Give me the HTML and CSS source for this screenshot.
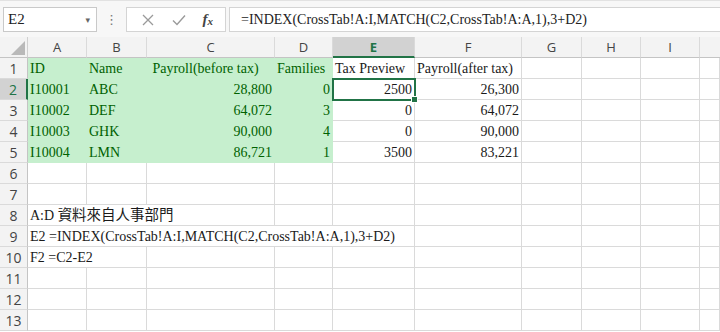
FILE: index.html
```html
<!DOCTYPE html>
<html lang="zh-Hant">
<head>
    <meta charset="UTF-8">
    <meta name="viewport" content="width=device-width, initial-scale=1.0">
    <title>CrossTab - Payroll</title>
    <link rel="stylesheet" href="styles.css">
</head>
<body>
    <div class="formula-bar">
        <div class="name-box">
            <span class="cell-ref">E2</span>
            <span class="drop">&#9662;</span>
        </div>
        <div class="grip">&#8942;</div>
        <div class="fx-buttons">
            <svg class="btn-icon" width="14" height="14" viewBox="0 0 14 14">
                <path d="M2 2 L12 12 M12 2 L2 12" stroke="#9a9a9a" stroke-width="1.3" fill="none"/>
            </svg>
            <svg class="btn-icon" width="16" height="14" viewBox="0 0 16 14">
                <path d="M2 7.5 L6 11.5 L14 2.5" stroke="#9a9a9a" stroke-width="1.4" fill="none"/>
            </svg>
            <span class="fx">f<sub>x</sub></span>
        </div>
        <div class="formula-input">=INDEX(CrossTab!A:I,MATCH(C2,CrossTab!A:A,1),3+D2)</div>
    </div>

    <div class="sheet">
        <!-- column headers -->
        <div class="corner"><span class="tri"></span></div>
        <div class="col-head">A</div>
        <div class="col-head">B</div>
        <div class="col-head">C</div>
        <div class="col-head">D</div>
        <div class="col-head active">E</div>
        <div class="col-head">F</div>
        <div class="col-head">G</div>
        <div class="col-head">H</div>
        <div class="col-head">I</div>
        <div class="col-head last"></div>

        <!-- row 1 -->
        <div class="row-head">1</div>
        <div class="cell good">ID</div>
        <div class="cell good">Name</div>
        <div class="cell good mid">Payroll(before tax)</div>
        <div class="cell good">Families</div>
        <div class="cell">Tax Preview</div>
        <div class="cell">Payroll(after tax)</div>
        <div class="cell"></div>
        <div class="cell"></div>
        <div class="cell"></div>
        <div class="cell"></div>

        <!-- row 2 -->
        <div class="row-head active">2</div>
        <div class="cell good">I10001</div>
        <div class="cell good">ABC</div>
        <div class="cell good num">28,800</div>
        <div class="cell good num">0</div>
        <div class="cell num selected">2500<span class="handle"></span></div>
        <div class="cell num">26,300</div>
        <div class="cell"></div>
        <div class="cell"></div>
        <div class="cell"></div>
        <div class="cell"></div>

        <!-- row 3 -->
        <div class="row-head">3</div>
        <div class="cell good">I10002</div>
        <div class="cell good">DEF</div>
        <div class="cell good num">64,072</div>
        <div class="cell good num">3</div>
        <div class="cell num">0</div>
        <div class="cell num">64,072</div>
        <div class="cell"></div>
        <div class="cell"></div>
        <div class="cell"></div>
        <div class="cell"></div>

        <!-- row 4 -->
        <div class="row-head">4</div>
        <div class="cell good">I10003</div>
        <div class="cell good">GHK</div>
        <div class="cell good num">90,000</div>
        <div class="cell good num">4</div>
        <div class="cell num">0</div>
        <div class="cell num">90,000</div>
        <div class="cell"></div>
        <div class="cell"></div>
        <div class="cell"></div>
        <div class="cell"></div>

        <!-- row 5 -->
        <div class="row-head">5</div>
        <div class="cell good">I10004</div>
        <div class="cell good">LMN</div>
        <div class="cell good num">86,721</div>
        <div class="cell good num">1</div>
        <div class="cell num">3500</div>
        <div class="cell num">83,221</div>
        <div class="cell"></div>
        <div class="cell"></div>
        <div class="cell"></div>
        <div class="cell"></div>

        <!-- row 6 -->
        <div class="row-head">6</div>
        <div class="cell"></div>
        <div class="cell"></div>
        <div class="cell"></div>
        <div class="cell"></div>
        <div class="cell"></div>
        <div class="cell"></div>
        <div class="cell"></div>
        <div class="cell"></div>
        <div class="cell"></div>
        <div class="cell"></div>

        <!-- row 7 -->
        <div class="row-head">7</div>
        <div class="cell"></div>
        <div class="cell"></div>
        <div class="cell"></div>
        <div class="cell"></div>
        <div class="cell"></div>
        <div class="cell"></div>
        <div class="cell"></div>
        <div class="cell"></div>
        <div class="cell"></div>
        <div class="cell"></div>

        <!-- row 8: text spills over A:C -->
        <div class="row-head">8</div>
        <div class="cell span3">A:D&nbsp;<span class="cjk">資料來自人事部門</span></div>
        <div class="cell"></div>
        <div class="cell"></div>
        <div class="cell"></div>
        <div class="cell"></div>
        <div class="cell"></div>
        <div class="cell"></div>
        <div class="cell"></div>

        <!-- row 9: text spills over A:E -->
        <div class="row-head">9</div>
        <div class="cell span5">E2 =INDEX(CrossTab!A:I,MATCH(C2,CrossTab!A:A,1),3+D2)</div>
        <div class="cell"></div>
        <div class="cell"></div>
        <div class="cell"></div>
        <div class="cell"></div>
        <div class="cell"></div>

        <!-- row 10 -->
        <div class="row-head">10</div>
        <div class="cell span2">F2 =C2-E2</div>
        <div class="cell"></div>
        <div class="cell"></div>
        <div class="cell"></div>
        <div class="cell"></div>
        <div class="cell"></div>
        <div class="cell"></div>
        <div class="cell"></div>
        <div class="cell"></div>

        <!-- row 11 -->
        <div class="row-head">11</div>
        <div class="cell"></div>
        <div class="cell"></div>
        <div class="cell"></div>
        <div class="cell"></div>
        <div class="cell"></div>
        <div class="cell"></div>
        <div class="cell"></div>
        <div class="cell"></div>
        <div class="cell"></div>
        <div class="cell"></div>

        <!-- row 12 -->
        <div class="row-head">12</div>
        <div class="cell"></div>
        <div class="cell"></div>
        <div class="cell"></div>
        <div class="cell"></div>
        <div class="cell"></div>
        <div class="cell"></div>
        <div class="cell"></div>
        <div class="cell"></div>
        <div class="cell"></div>
        <div class="cell"></div>

        <!-- row 13 -->
        <div class="row-head">13</div>
        <div class="cell"></div>
        <div class="cell"></div>
        <div class="cell"></div>
        <div class="cell"></div>
        <div class="cell"></div>
        <div class="cell"></div>
        <div class="cell"></div>
        <div class="cell"></div>
        <div class="cell"></div>
        <div class="cell"></div>
    </div>
</body>
</html>
```

FILE: styles.css
```css
body {
    margin: 0;
    background-color: #fff;
    font-family: "Liberation Serif", "Noto Sans CJK TC", serif;
    overflow: hidden;
}
.formula-bar {
    display: flex;
    align-items: stretch;
    height: 25px;
    padding: 6px 0 5px 3px;
    background-color: #f7f7f7;
    border-top: 1px solid #e2e2e2;
}
.name-box {
    width: 94px;
    box-sizing: border-box;
    display: flex;
    align-items: center;
    justify-content: space-between;
    padding: 0 6px 0 4px;
    background-color: #fff;
    border: 1px solid #c9c9c9;
}
.cell-ref {
    font-size: 15px;
    color: #222;
}
.drop {
    font-family: "DejaVu Sans", sans-serif;
    font-size: 9px;
    color: #666;
}
.grip {
    width: 29px;
    display: flex;
    align-items: center;
    justify-content: center;
    font-family: "DejaVu Sans", sans-serif;
    font-size: 13px;
    color: #777;
}
.fx-buttons {
    width: 100px;
    box-sizing: border-box;
    display: flex;
    align-items: center;
    justify-content: space-around;
    padding: 0 4px 0 6px;
    background-color: #fff;
    border: 1px solid #d4d4d4;
}
.fx {
    font-family: "Liberation Serif", serif;
    font-style: italic;
    font-weight: bold;
    font-size: 15px;
    color: #444;
}
.fx sub {
    font-size: 11px;
    vertical-align: -1px;
}
.formula-input {
    flex: 1;
    margin-left: 3px;
    display: flex;
    align-items: center;
    padding-left: 11px;
    background-color: #fff;
    border: 1px solid #d4d4d4;
    border-right: none;
    font-size: 14px;
    color: #222;
    white-space: nowrap;
}

.sheet {
    display: grid;
    grid-template-columns: 28px 59px 60px 128px 58px 82px 107px 60px 59px 59px 1fr;
    grid-auto-rows: 21px;
}
.corner,
.col-head,
.row-head {
    box-sizing: border-box;
    background-color: #f3f3f3;
    font-family: "Open Sans", "Noto Sans", sans-serif;
    color: #444;
    display: flex;
    align-items: center;
    justify-content: center;
}
.corner {
    position: relative;
    border-right: 1px solid #d0d0d0;
    border-bottom: 1px solid #c4c4c4;
}
.tri {
    position: absolute;
    right: 2px;
    bottom: 2px;
    width: 0;
    height: 0;
    border-left: 14px solid transparent;
    border-bottom: 14px solid #b9b9b9;
}
.col-head {
    font-size: 13px;
    border-right: 1px solid #dadada;
    border-bottom: 1px solid #c4c4c4;
}
.col-head.active {
    background-color: #d2d2d2;
    color: #217346;
    font-weight: bold;
    border-bottom: 2px solid #217346;
}
.col-head.last {
    border-right: none;
}
.row-head {
    font-size: 14px;
    border-right: 1px solid #c4c4c4;
    border-bottom: 1px solid #dadada;
}
.row-head.active {
    background-color: #d2d2d2;
    color: #217346;
    border-right: 2px solid #217346;
}

.cell {
    box-sizing: border-box;
    border-right: 1px solid #dadada;
    border-bottom: 1px solid #dadada;
    font-size: 14px;
    color: #1a1a1a;
    padding: 0 2px;
    display: flex;
    align-items: flex-end;
    padding-bottom: 1px;
    white-space: nowrap;
    overflow: visible;
}
.cell.num {
    justify-content: flex-end;
}
.cell.mid {
    justify-content: center;
    padding-right: 12px;
}
.cell.good {
    background-color: #c6efce;
    border-color: #c6efce;
    color: #006100;
}
.cell.selected {
    position: relative;
    outline: 2px solid #217346;
    outline-offset: -1px;
    z-index: 1;
}
.handle {
    position: absolute;
    right: -4px;
    bottom: -4px;
    width: 5px;
    height: 5px;
    background-color: #217346;
    border: 1px solid #fff;
}
.span2 {
    grid-column: span 2;
}
.span3 {
    grid-column: span 3;
}
.span5 {
    grid-column: span 5;
}
.cjk {
    font-family: "Noto Sans CJK TC", sans-serif;
    font-size: 14.5px;
}
```
